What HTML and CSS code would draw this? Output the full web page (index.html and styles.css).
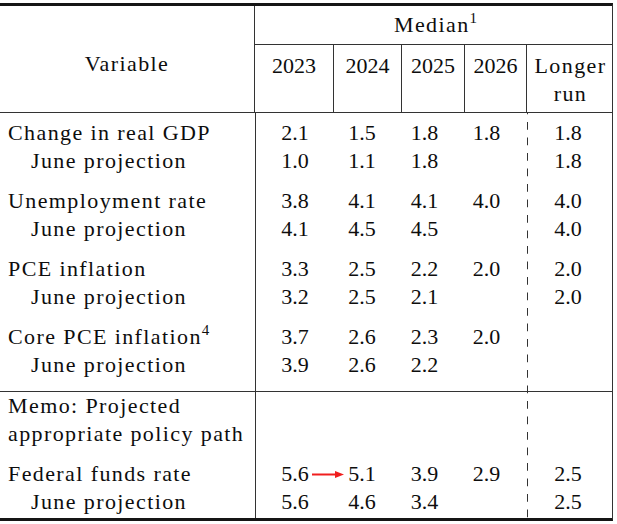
FILE: index.html
```html
<!DOCTYPE html>
<html lang="en">
<head>
<meta charset="utf-8">
<title>Economic projections</title>
<link rel="stylesheet" href="styles.css">
</head>
<body>
<div class="table">
  <div class="head">
    <div class="var-cell"><span class="label">Variable</span></div>
    <div class="median">
      <div class="median-title"><span class="label">Median</span><sup class="sup">1</sup></div>
      <div class="years">
        <div class="year y1">2023</div>
        <div class="year y2">2024</div>
        <div class="year y3">2025</div>
        <div class="year y4">2026</div>
        <div class="year y5"><span class="label">Longer</span><br><span class="label">run</span></div>
      </div>
    </div>
  </div>
  <div class="body">
    <div class="section main">
      <div class="row">
        <div class="lab">Change in real GDP</div>
        <div class="num">2.1</div><div class="num">1.5</div><div class="num">1.8</div><div class="num">1.8</div><div class="sp"></div><div class="num lr">1.8</div>
      </div>
      <div class="row">
        <div class="lab sub">June projection</div>
        <div class="num">1.0</div><div class="num">1.1</div><div class="num">1.8</div><div class="num"></div><div class="sp"></div><div class="num lr">1.8</div>
      </div>
      <div class="row first">
        <div class="lab">Unemployment rate</div>
        <div class="num">3.8</div><div class="num">4.1</div><div class="num">4.1</div><div class="num">4.0</div><div class="sp"></div><div class="num lr">4.0</div>
      </div>
      <div class="row">
        <div class="lab sub">June projection</div>
        <div class="num">4.1</div><div class="num">4.5</div><div class="num">4.5</div><div class="num"></div><div class="sp"></div><div class="num lr">4.0</div>
      </div>
      <div class="row first">
        <div class="lab">PCE inflation</div>
        <div class="num">3.3</div><div class="num">2.5</div><div class="num">2.2</div><div class="num">2.0</div><div class="sp"></div><div class="num lr">2.0</div>
      </div>
      <div class="row">
        <div class="lab sub">June projection</div>
        <div class="num">3.2</div><div class="num">2.5</div><div class="num">2.1</div><div class="num"></div><div class="sp"></div><div class="num lr">2.0</div>
      </div>
      <div class="row first">
        <div class="lab">Core PCE inflation<sup class="sup">4</sup></div>
        <div class="num">3.7</div><div class="num">2.6</div><div class="num">2.3</div><div class="num">2.0</div><div class="sp"></div><div class="num lr"></div>
      </div>
      <div class="row">
        <div class="lab sub">June projection</div>
        <div class="num">3.9</div><div class="num">2.6</div><div class="num">2.2</div><div class="num"></div><div class="sp"></div><div class="num lr"></div>
      </div>
    </div>
    <div class="section memo">
      <div class="row">
        <div class="lab">Memo: Projected</div>
        <div class="num"></div><div class="num"></div><div class="num"></div><div class="num"></div><div class="sp"></div><div class="num lr"></div>
      </div>
      <div class="row">
        <div class="lab">appropriate policy path</div>
        <div class="num"></div><div class="num"></div><div class="num"></div><div class="num"></div><div class="sp"></div><div class="num lr"></div>
      </div>
      <div class="row first">
        <div class="lab">Federal funds rate</div>
        <div class="num arrow-from">5.6<svg class="arrow" width="32" height="9" viewBox="0 0 32 9"><line x1="0" y1="4.5" x2="24" y2="4.5" stroke="#f01e1e" stroke-width="2"/><polygon points="23,1 32,4.5 23,8" fill="#f01e1e"/></svg></div>
        <div class="num">5.1</div><div class="num">3.9</div><div class="num">2.9</div><div class="sp"></div><div class="num lr">2.5</div>
      </div>
      <div class="row">
        <div class="lab sub">June projection</div>
        <div class="num">5.6</div><div class="num">4.6</div><div class="num">3.4</div><div class="num"></div><div class="sp"></div><div class="num lr">2.5</div>
      </div>
    </div>
  </div>
</div>
</body>
</html>
```
FILE: styles.css
```css
html, body {
  margin: 0;
  padding: 0;
  background: #ffffff;
}

body {
  font-family: "Liberation Serif", "Times New Roman", serif;
  font-size: 22px;
  color: #0d0d0d;
}

.table {
  width: 613px;
  margin-top: 3px;
  border-top: 3px solid #151515;
  border-bottom: 3px solid #151515;
  border-right: 1px solid #333;
  box-sizing: border-box;
}

.label, .lab {
  letter-spacing: 1.4px;
}

.sup {
  font-size: 15px;
  letter-spacing: 0;
  vertical-align: 9px;
  line-height: 0;
}

/* Header */
.head {
  display: flex;
  border-bottom: 1px solid #333;
}

.var-cell {
  width: 255px;
  border-right: 1px solid #333;
  text-align: center;
  line-height: 28px;
  padding-top: 44px;
  box-sizing: border-box;
}

.median {
  flex: 1;
  display: flex;
  flex-direction: column;
}

.median-title {
  height: 38px;
  line-height: 38px;
  text-align: center;
  border-bottom: 1px solid #333;
  padding-left: 4px;
}

.years {
  display: flex;
  height: 67px;
}

.year {
  text-align: center;
  line-height: 28px;
  padding-top: 7px;
  border-right: 1px solid #333;
}

.y1 { width: 78px; }
.y2 { width: 67px; }
.y3 { width: 62px; }
.y4 { width: 61px; }
.y5 { flex: 1; border-right: none; padding-left: 2px; }

/* Body */
.body {
  background-image:
    linear-gradient(#333, #333),
    linear-gradient(to bottom, #333 0, #333 8px, transparent 8px, transparent 15.5px);
  background-size: 1px 100%, 1px 15.5px;
  background-position: 255px 0, 527px 9px;
  background-repeat: no-repeat, repeat-y;
}

.section.main {
  padding-top: 6px;
  padding-bottom: 12px;
}

.section.memo {
  border-top: 1px solid #333;
  padding-bottom: 2px;
}

.row {
  display: grid;
  grid-template-columns: 256px 78px 56px 69px 55px 14px 84px;
  line-height: 28px;
}

.row.first > * {
  padding-top: 12px;
}

.lab {
  padding-left: 8px;
  white-space: nowrap;
}

.lab.sub {
  padding-left: 31px;
}

.num {
  text-align: center;
}

.num.lr {
  padding-right: 4px;
}

.arrow-from {
  position: relative;
}

.arrow {
  position: absolute;
  left: 56px;
  bottom: 9px;
}
```
